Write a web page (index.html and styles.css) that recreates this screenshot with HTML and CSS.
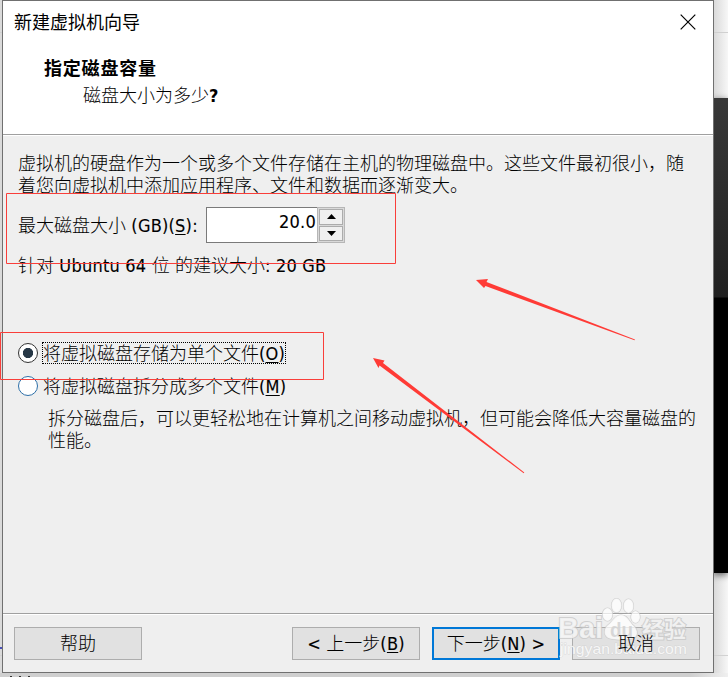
FILE: index.html
```html
<!DOCTYPE html>
<html lang="zh-CN">
<head>
<meta charset="utf-8">
<title>新建虚拟机向导</title>
<link rel="stylesheet" href="styles.css">
</head>
<body>
<div class="backdrop"><span class="backdrop-dark"></span><span class="backdrop-mark"></span><span class="backdrop-ticks"></span></div>
<main class="dialog">
  <header class="header">
    <div class="titlebar">
      <h1 class="title">新建虚拟机向导</h1>
      <svg class="close" width="16" height="16" viewBox="0 0 16 16"><path d="M.7.7 15.3 15.3M15.3.7.7 15.3" fill="none" stroke="#000" stroke-width="1.2"/></svg>
    </div>
    <h2 class="heading">指定磁盘容量</h2>
    <p class="subheading">磁盘大小为多少<b class="question">?</b></p>
  </header>
  <section class="content">
    <p class="intro">虚拟机的硬盘作为一个或多个文件存储在主机的物理磁盘中。这些文件最初很小，随<br>着您向虚拟机中添加应用程序、文件和数据而逐渐变大。</p>
    <div class="size-row">
      <label class="size-label">最大磁盘大小<span class="latin"> (GB)(<u>S</u>):</span></label>
      <div class="spinner">
        <span class="value latin">20.0</span>
        <span class="steps">
          <span class="step"><svg width="9" height="5" viewBox="0 0 9 5"><path d="M0 5 4.5 0 9 5Z"/></svg></span>
          <span class="step"><svg width="9" height="5" viewBox="0 0 9 5"><path d="M0 0 4.5 5 9 0Z"/></svg></span>
        </span>
      </div>
    </div>
    <p class="advice">针对<span class="latin"> Ubuntu 64 </span>位 的建议大小<span class="latin">: 20 GB</span></p>
    <div class="option"><span class="radio radio-on"></span><span class="option-text focused">将虚拟磁盘存储为单个文件<span class="latin">(<u>O</u>)</span></span></div>
    <div class="option"><span class="radio"></span><span class="option-text">将虚拟磁盘拆分成多个文件<span class="latin">(<u>M</u>)</span></span></div>
    <p class="option-note">拆分磁盘后，可以更轻松地在计算机之间移动虚拟机，但可能会降低大容量磁盘的<br>性能。</p>
  </section>
  <footer class="footer">
    <span class="button help">帮助</span>
    <span class="button"><span class="latin">&lt; </span>上一步<span class="latin">(<u>B</u>)</span></span>
    <span class="button primary">下一步<span class="latin">(<u>N</u>) &gt;</span></span>
    <span class="button"><span class="cancel-text">取消</span></span>
  </footer>
</main>
<svg class="annotations" width="728" height="677" viewBox="0 0 728 677">
  <g fill="none" stroke="#f93e3a"><path d="M6.500 193.500H395.500V263.500H6.500Z"/><path d="M.5 332.500H323.500V379.500H.5Z"/></g>
  <g fill="#ff3b36"><path d="M476 280 488 279 486.500 282 635 339.500 634.500 340.300 485.500 286 484 288Z"/><path d="M373 358 384.500 360.500 383 363 524.300 472.500 523.700 473.300 379.500 365.500 378.500 368Z"/></g>
</svg>
<svg class="watermark" width="140" height="66" viewBox="0 0 140 66">
  <g fill="#fff" fill-opacity=".72" stroke="#c4c4c4" stroke-opacity=".75" stroke-width="1.2">
    <ellipse cx="19.500" cy="20.500" rx="5" ry="6.500"/>
    <ellipse cx="28.500" cy="11.500" rx="5" ry="7"/>
    <ellipse cx="40.500" cy="12" rx="5" ry="7"/>
    <ellipse cx="47.500" cy="23" rx="4.500" ry="6"/>
    <path d="M33 21C27 21 25 27 20 31C15 35 15 44 24 45C29 46 38 46 43 45C51 44 50 36 46 32C41 28 40 21 33 21Z"/>
  </g>
  <g class="mark-main">
    <text x="-30" y="44" font-size="29" textLength="45" lengthAdjust="spacingAndGlyphs">Bai</text>
    <text class="mark-du" x="22" y="43" font-size="20" textLength="23" lengthAdjust="spacingAndGlyphs">du</text>
    <text x="54" y="43" font-size="22" textLength="44" lengthAdjust="spacingAndGlyphs">经验</text>
  </g>
  <text class="mark-url" x="-28" y="60" font-size="15" textLength="127" lengthAdjust="spacingAndGlyphs">jingyan.baidu.com</text>
</svg>
</body>
</html>
```
FILE: styles.css
```css
* { box-sizing: border-box; }
body {
  position: relative;
  width: 728px;
  height: 677px;
  margin: 0;
  overflow: hidden;
  background: #e8e8e8;
  color: #000;
  font: 300 18px/22px "DejaVu Sans Condensed", "Noto Sans CJK SC", sans-serif;
}
h1, h2, p { margin: 0; font-weight: 300; }
u { text-decoration-thickness: 1px; text-underline-offset: 2px; }
.latin { letter-spacing: .22px; white-space: pre; -webkit-text-stroke: .1px #000; }

/* The windows behind the dialog */
.backdrop {
  position: absolute;
  inset: 0;
  background:
    linear-gradient(#d0d0d0, #d0d0d0) 0 32px / 100% 1px no-repeat,
    linear-gradient(#d2d2d2, #d2d2d2) 0 655px / 100% 1px no-repeat,
    linear-gradient(90deg, #cfcfcf 690px, #f0f0f0 728px) 0 673px / 100% 4px no-repeat,
    linear-gradient(90deg, #dadada 714px, #f7f7f7 728px);
}
.backdrop-dark {
  position: absolute;
  left: 713px;
  top: 98px;
  width: 15px;
  height: 475px;
  background: linear-gradient(#383838, #202020 199px, #000 200px);
  box-shadow: 0 2px 7px #0009;
}
.backdrop-mark { position: absolute; left: 0; top: 647px; width: 2px; height: 2px; background: #4a50b8; }
.backdrop-ticks {
  position: absolute;
  left: 10px;
  top: 676px;
  width: 21px;
  height: 1px;
  background: repeating-linear-gradient(90deg, #333 0 2px, transparent 2px 9px);
}

.dialog {
  position: relative;
  display: flex;
  flex-direction: column;
  width: 712px;
  height: 673px;
  margin-left: 2px;
  border: 1px solid #707070;
  background: #efefef;
}
.header { height: 134px; padding: 10px 17px 0 11px; border-bottom: 1px solid #a0a0a0; background: #fff; }
.titlebar { display: flex; justify-content: space-between; align-items: center; height: 22px; }
.title { padding-top: 1px; font-size: 18px; font-weight: 400; line-height: 22px; }
.heading { margin: 23px 0 0 30px; font: 700 18px/22px "Noto Sans CJK SC", sans-serif; letter-spacing: .8px; }
.subheading { margin: 7px 0 0 69px; }
.question { font-weight: 700; }

.content { flex: 1; padding: 17px 0 0 15px; border-top: 1px solid #fff; white-space: nowrap; }
.size-row { display: flex; align-items: center; height: 36px; margin-top: 10px; }
.size-label { width: 188px; padding-top: 2px; }
.spinner { display: flex; width: 139px; height: 36px; border: 1px solid #7a7a7a; background: #fff; }
.value { flex: 1; padding: 3px 2px 0 0; text-align: right; }
.steps { display: flex; flex-direction: column; gap: 1px; width: 26px; padding: 1px; background: #d9d9d9; outline: 1px solid #b6b6b6; }
.step { display: flex; flex: 1; align-items: center; justify-content: center; border: 1px solid #acacac; background: #f0f0f0; }
.advice { margin-top: 12px; }
.option { display: flex; align-items: center; height: 24px; margin-top: 9px; }
.advice + .option { margin-top: 64px; }
.radio { width: 20px; height: 20px; border: 1px solid #2d6fa8; border-radius: 50%; background: #fff; }
.radio-on { border-color: #333; background: radial-gradient(circle, #263746 4.8px, #fff 5.400px); }
.option-text { margin-left: 4px; padding: 0 1px; height: 22px; line-height: 24px; }
.focused { outline: 1px dotted #000; outline-offset: -1px; }
.option-note { margin: 10px 0 0 30px; }

.footer { display: flex; gap: 12px; height: 59px; padding: 13px 13px 12px 11px; border-top: 1px solid #a0a0a0; box-shadow: inset 0 1px #fff; }
.button { display: flex; align-items: center; justify-content: center; width: 128px; height: 33px; border: 1px solid #adadad; background: #e1e1e1; white-space: pre; }
.help { margin-right: auto; }
.primary { border: 2px solid #0078d7; }
.cancel-text { position: relative; z-index: 1; }

.annotations { position: absolute; left: 0; top: 0; }
.watermark { position: absolute; left: 588px; top: 594px; overflow: visible; font-family: "Liberation Sans", "Noto Sans CJK SC", sans-serif; paint-order: stroke; }
.mark-main { fill: #f6f6f6; fill-opacity: .85; stroke: #c8c8c8; stroke-opacity: .8; stroke-width: 2px; font-weight: 700; }
.mark-du { fill: #d2d2d2; stroke: none; }
.mark-url { fill: #fff; fill-opacity: .8; stroke: #cfcfcf; stroke-opacity: .6; stroke-width: 1px; }
```
